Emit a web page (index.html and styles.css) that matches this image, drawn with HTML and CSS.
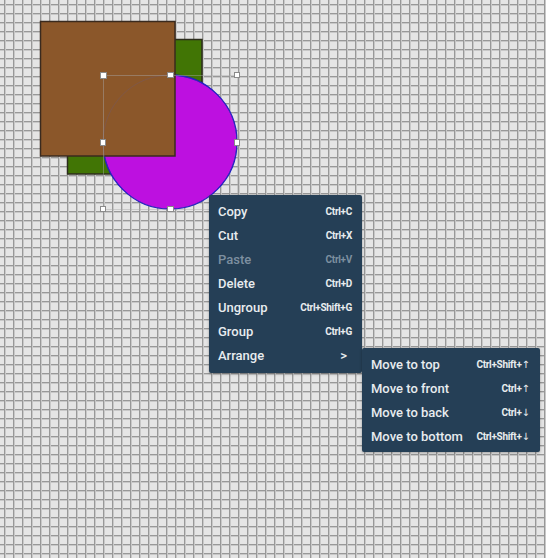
FILE: index.html
```html
<!DOCTYPE html>
<html>
<head>
<meta charset="utf-8">
<link rel="stylesheet" href="styles.css">
</head>
<body>
<div class="canvas">
  <svg class="shapes" width="546" height="558" viewBox="0 0 546 558">
    <rect x="67.5" y="39.5" width="134.5" height="134.5" fill="#417505" stroke="#2c2c1c" stroke-width="1.5"/>
    <circle cx="170" cy="142" r="67" fill="#BD10E0" stroke="#1010d8" stroke-width="1.3"/>
    <rect x="40.5" y="21.5" width="134.5" height="134.5" fill="#8B572A" stroke="#3a2a1e" stroke-width="1.5"/>
    <circle cx="170" cy="142" r="67" fill="none" stroke="#6a5a7a" stroke-opacity="0.35" stroke-width="1"/>
    <rect x="103.5" y="75.5" width="134" height="134" fill="none" stroke="#a8a8a8" stroke-opacity="0.45" stroke-width="1"/>
    <g fill="#fff" stroke="#8a8a8a" stroke-width="1">
      <rect x="100.5" y="72.5" width="6" height="6"/>
      <rect x="167.5" y="72.5" width="6" height="5"/>
      <rect x="234.5" y="72.5" width="5" height="5"/>
      <rect x="100.5" y="139.5" width="5" height="6"/>
      <rect x="234.5" y="139.5" width="5" height="6"/>
      <rect x="100.5" y="206.5" width="5" height="5"/>
      <rect x="167.5" y="206.5" width="6" height="5"/>
      <rect x="234.5" y="206.5" width="5" height="5"/>
    </g>
  </svg>

  <div class="menu main-menu">
    <div class="item"><span class="label">Copy</span><span class="key">Ctrl+C</span></div>
    <div class="item"><span class="label">Cut</span><span class="key">Ctrl+X</span></div>
    <div class="item disabled"><span class="label">Paste</span><span class="key">Ctrl+V</span></div>
    <div class="item"><span class="label">Delete</span><span class="key">Ctrl+D</span></div>
    <div class="item"><span class="label">Ungroup</span><span class="key">Ctrl+Shift+G</span></div>
    <div class="item"><span class="label">Group</span><span class="key">Ctrl+G</span></div>
    <div class="item"><span class="label">Arrange</span><span class="arrow">&gt;</span></div>
  </div>

  <div class="menu sub-menu">
    <div class="item"><span class="label">Move to top</span><span class="key">Ctrl+Shift+<span class="dir">↑</span></span></div>
    <div class="item"><span class="label">Move to front</span><span class="key">Ctrl+<span class="dir">↑</span></span></div>
    <div class="item"><span class="label">Move to back</span><span class="key">Ctrl+<span class="dir">↓</span></span></div>
    <div class="item"><span class="label">Move to bottom</span><span class="key">Ctrl+Shift+<span class="dir">↓</span></span></div>
  </div>
</div>
</body>
</html>
```

FILE: styles.css
```css
html, body {
  margin: 0;
  padding: 0;
}

body {
  width: 546px;
  height: 558px;
  overflow: hidden;
  font-family: Roboto, "Liberation Sans", sans-serif;
}

.canvas {
  position: relative;
  width: 546px;
  height: 558px;
  background-color: #e5e5e5;
  background-image:
    linear-gradient(to right, transparent 0, #989898 0 1px, #c8c8c8 1px 2px, transparent 2px),
    linear-gradient(to bottom, transparent 0, #989898 0 1px, #c8c8c8 1px 2px, transparent 2px);
  background-size: 9px 9px;
  background-position: 4px 4px;
}

.shapes {
  position: absolute;
  left: 0;
  top: 0;
}

.menu {
  position: absolute;
  background: #253f56;
  border-radius: 2px;
  box-shadow: 0 1px 3px rgba(0, 0, 0, 0.3);
  display: flex;
  flex-direction: column;
  padding: 4px 0;
  color: #e8ecef;
}

.main-menu {
  left: 209px;
  top: 195px;
  width: 153px;
  padding: 4px 0 6px;
}

.sub-menu {
  left: 362px;
  top: 348px;
  width: 178px;
}

.item {
  height: 24px;
  display: flex;
  align-items: center;
  justify-content: space-between;
  padding: 0 10px 0 9px;
}

.label {
  font-size: 13px;
  font-weight: 500;
}

.key {
  font-size: 10px;
  font-weight: 700;
  letter-spacing: -0.3px;
}

.dir {
  font-family: "DejaVu Sans", sans-serif;
  font-weight: 400;
  font-size: 10px;
  letter-spacing: 0;
}

.disabled {
  color: #7d8fa0;
}

.arrow {
  font-size: 13px;
  font-weight: 500;
  margin-right: 5px;
}
```
